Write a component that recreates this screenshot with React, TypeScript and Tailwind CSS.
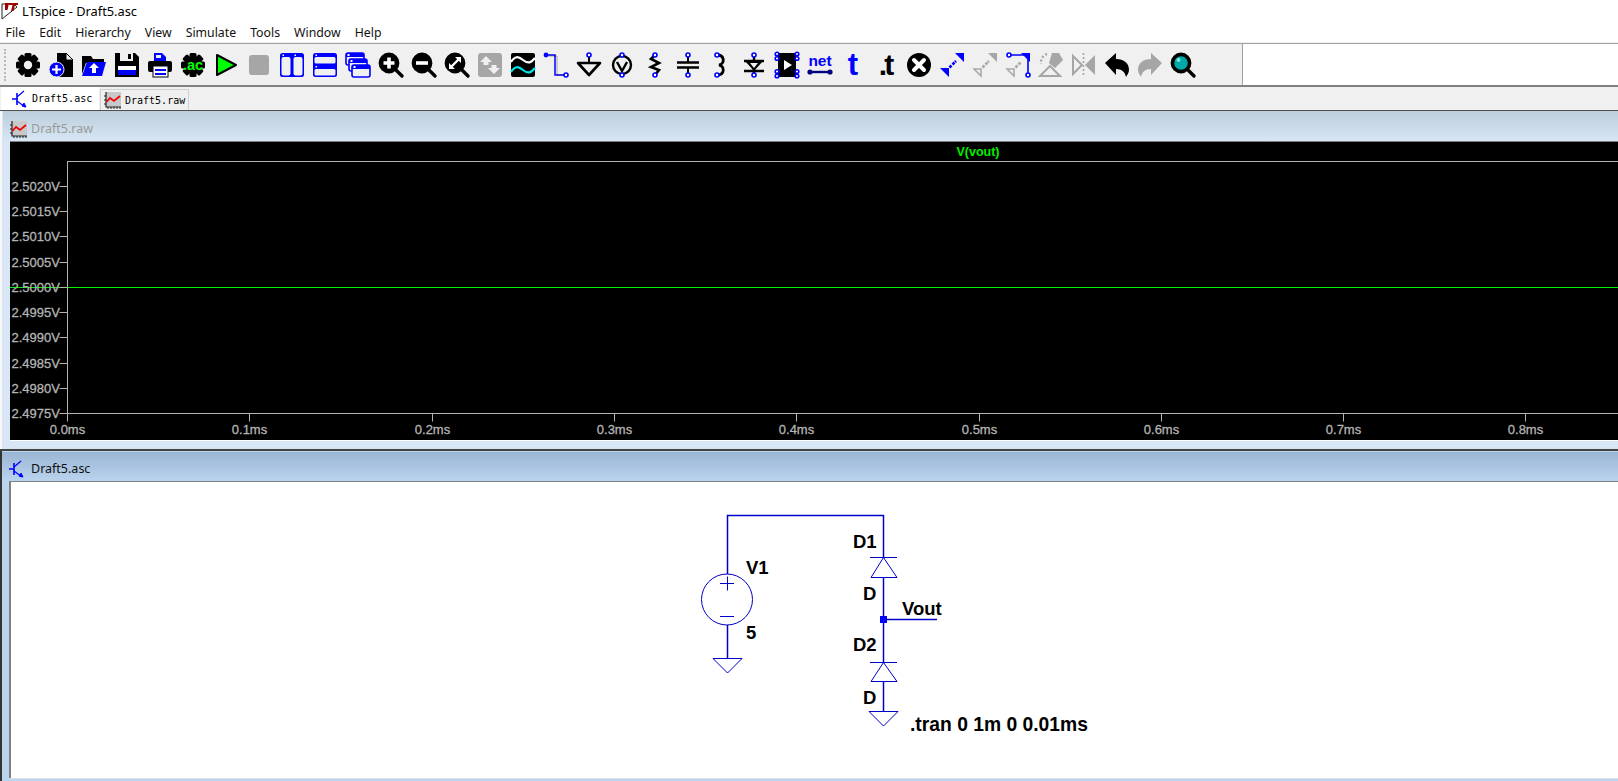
import type { ReactNode } from "react";

const BLUE = "#0000ff";
const GRAY = "#a6a6a6";

function Icon({ children }: { children: ReactNode }) {
  return (
    <div className="flex w-[33px] shrink-0 items-center justify-center">
      <svg width="26" height="26" viewBox="0 0 26 26" className="overflow-visible">
        {children}
      </svg>
    </div>
  );
}

const Pin = ({ x, y, c = BLUE }: { x: number; y: number; c?: string }) => (
  <circle cx={x} cy={y} r="2" fill="#fff" stroke={c} strokeWidth="1.6" />
);

const gearTeeth = [0, 45, 90, 135];

const Gear = ({ fill = "#000", hole = "#f0f0f0", r = 4.2 }: { fill?: string; hole?: string; r?: number }) => (
  <g>
    {gearTeeth.map((a) => (
      <rect key={a} x="9.5" y="1" width="7" height="24" rx="1.5" fill={fill} transform={`rotate(${a} 13 13)`} />
    ))}
    <circle cx="13" cy="13" r="9" fill={fill} />
    {r > 0 && <circle cx="13" cy="13" r={r} fill={hole} />}
  </g>
);

const Lens = ({ children, fill = "#000" }: { children?: ReactNode; fill?: string }) => (
  <g>
    <line x1="17" y1="17" x2="24" y2="24" stroke="#000" strokeWidth="3.4" strokeLinecap="round" />
    <circle cx="11" cy="11" r="8.6" fill={fill} stroke="#000" strokeWidth="3.6" />
    {children}
  </g>
);

const toolbarIcons: ReactNode[] = [
  <Gear key="settings" />,
  <g key="new">
    <path d="M9 1h9l7 7v17H9z" fill="#000" />
    <path d="M18 1v7h7z" fill="#f0f0f0" stroke="#000" strokeWidth="1" />
    <circle cx="8.5" cy="17.5" r="7.5" fill={BLUE} stroke="#f0f0f0" strokeWidth="1" />
    <path d="M8.5 13v9M4 17.5h9" stroke="#fff" strokeWidth="2.2" />
  </g>,
  <g key="open">
    <path d="M1 4h9l2 3h11v4H5L1 22z" fill="#000" />
    <path d="M6 10h19l-4 14H1z" fill={BLUE} />
    <path d="M13 11l5 5h-3v5h-4v-5H8z" fill="#fff" />
  </g>,
  <g key="save">
    <path d="M1 1h20l4 4v20H1z" fill="#000" />
    <rect x="6" y="1" width="13" height="8" fill="#f0f0f0" />
    <rect x="14" y="2" width="3" height="5" fill="#000" />
    <rect x="4" y="14" width="18" height="9" fill="#fff" />
    <rect x="4" y="18" width="18" height="5" fill={BLUE} />
  </g>,
  <g key="print">
    <path d="M7 1h8l4 4v5H7z" fill={BLUE} />
    <path d="M9 3h5v3H9z" fill="#f0f0f0" />
    <rect x="1" y="9" width="24" height="11" rx="2" fill="#000" />
    <rect x="6" y="14" width="15" height="11" fill="#fff" stroke="#000" strokeWidth="1" />
    <path d="M8 18h11M8 22h11" stroke={BLUE} strokeWidth="2" />
  </g>,
  <g key="ac">
    <Gear r={0} />
    <text x="13" y="18" textAnchor="middle" fontFamily="Liberation Sans, sans-serif" fontWeight="700" fontSize="14.5" fill="#00ff00">
      .ac
    </text>
  </g>,
  <path key="run" d="M4 3l19 10L4 23z" fill="#00ff00" stroke="#000" strokeWidth="2" strokeLinejoin="round" />,
  <rect key="stop" x="3" y="3" width="20" height="20" rx="3" fill={GRAY} />,
  <g key="tile-v">
    <rect x="1" y="1" width="24" height="24" rx="2.5" fill={BLUE} />
    <rect x="2.5" y="5" width="9" height="18.5" rx="2" fill="#f0f0f0" />
    <rect x="14.5" y="5" width="9" height="18.5" rx="2" fill="#f0f0f0" />
    <rect x="3.5" y="2.5" width="1.5" height="1.5" fill="#fff" />
    <rect x="15.5" y="2.5" width="1.5" height="1.5" fill="#fff" />
  </g>,
  <g key="tile-h">
    <rect x="1" y="1" width="24" height="24" rx="2.5" fill={BLUE} />
    <rect x="2.5" y="5" width="21" height="6.5" rx="1.5" fill="#f0f0f0" />
    <rect x="2.5" y="17" width="21" height="6.5" rx="1.5" fill="#f0f0f0" />
    <rect x="3.5" y="2.5" width="1.5" height="1.5" fill="#fff" />
    <rect x="3.5" y="14" width="1.5" height="1.5" fill="#fff" />
  </g>,
  <g key="cascade">
    {[
      [1, 1],
      [4, 7],
      [7, 13],
    ].map(([x, y]) => (
      <g key={x}>
        <rect x={x} y={y} width="18" height="12" rx="2" fill="#f0f0f0" stroke={BLUE} strokeWidth="1.6" />
        <rect x={x} y={y} width="18" height="4" fill={BLUE} />
        <rect x={x + 1.5} y={y + 1} width="2" height="2" fill="#fff" />
      </g>
    ))}
  </g>,
  <Lens key="zoom-in">
    <path d="M11 5.5v11M5.5 11h11" stroke="#fff" strokeWidth="3.6" />
  </Lens>,
  <Lens key="zoom-out">
    <path d="M5 11h12" stroke="#fff" strokeWidth="3.6" />
  </Lens>,
  <Lens key="zoom-fit">
    <path d="M7.5 14.5l7-7" stroke="#fff" strokeWidth="2.4" />
    <path d="M11 5h6v6zM5 11v6h6z" fill="#fff" />
  </Lens>,
  <g key="autorange">
    <rect x="1" y="1" width="24" height="24" rx="3" fill={GRAY} />
    <path d="M9 4l6 6h-3.500v3h-5v-3H3z" fill="#f0f0f0" />
    <path d="M17 22l-6-6h3.500v-3h5v3H23z" fill="#f0f0f0" />
  </g>,
  <g key="waveforms">
    <rect x="1" y="1" width="24" height="24" rx="2" fill="#000" />
    <path d="M1 10c4-6 7-6 12-2s8 3 12-2" stroke="#fff" strokeWidth="2.2" fill="none" />
    <path d="M1 20c4-6 7-6 12-2s8 3 12-2" stroke="#00e5e5" strokeWidth="2.2" fill="none" />
  </g>,
  <g key="wire">
    <path d="M3 3h9v20h11" stroke={BLUE} strokeWidth="1.5" fill="none" />
    <path d="M4 4h10v19h9" stroke="#000" strokeWidth="0.8" fill="none" opacity="0.4" />
    <circle cx="3" cy="3" r="2.4" fill={BLUE} />
    <Pin x={23} y={23} />
  </g>,
  <g key="ground">
    <line x1="13" y1="3" x2="13" y2="11" stroke="#000" strokeWidth="2" />
    <path d="M2 11h22L13 23z" fill="none" stroke="#000" strokeWidth="2.6" strokeLinejoin="round" />
    <Pin x={13} y={3} />
  </g>,
  <g key="label">
    <circle cx="13" cy="13" r="9" fill="none" stroke="#000" strokeWidth="2.4" />
    <path d="M8 10l5 9 5-9" fill="none" stroke="#000" strokeWidth="2.4" />
    <Pin x={13} y={3} />
    <Pin x={13} y={23} />
  </g>,
  <g key="resistor">
    <path d="M13 3l-4 4 8 4-8 4 8 3-4 5" fill="none" stroke="#000" strokeWidth="2.6" />
    <Pin x={13} y={3} />
    <Pin x={13} y={23} />
  </g>,
  <g key="capacitor">
    <path d="M13 3v7M13 16v7" stroke="#000" strokeWidth="2" />
    <path d="M2 10.5h22M2 15.5h22" stroke="#000" strokeWidth="2.6" />
    <Pin x={13} y={3} />
    <Pin x={13} y={23} />
  </g>,
  <g key="inductor">
    <path d="M9 3c8 0 8 9 2 10 6 1 6 10-2 10" fill="none" stroke="#000" strokeWidth="2.8" />
    <Pin x={9} y={3} />
    <Pin x={9} y={23} />
  </g>,
  <g key="diode">
    <path d="M3 9h20M13 3v20M3 19h20" stroke="#000" strokeWidth="2.4" />
    <path d="M4 9h18l-9 10z" fill="#000" />
    <path d="M9 11h8l-4 5z" fill="#f0f0f0" />
    <Pin x={13} y={3} />
    <Pin x={13} y={23} />
  </g>,
  <g key="component">
    <rect x="4" y="1" width="18" height="24" fill="#000" />
    <path d="M10 8l8 5-8 5z" fill="#fff" />
    {[2, 6.5, 19.5, 24].map((y) => (
      <g key={y}>
        <circle cx="3" cy={y} r="1.8" fill="#fff" stroke={BLUE} strokeWidth="1.6" />
        <circle cx="23" cy={y} r="1.8" fill="#fff" stroke={BLUE} strokeWidth="1.6" />
      </g>
    ))}
  </g>,
  <g key="net">
    <text x="13" y="14" textAnchor="middle" fontFamily="Liberation Sans, sans-serif" fontWeight="700" fontSize="15.5" fill={BLUE}>
      net
    </text>
    <path d="M3 20h20" stroke="#000080" strokeWidth="2.4" />
    <circle cx="3" cy="20" r="2.6" fill="#000080" />
    <circle cx="23" cy="20" r="2.6" fill="#000080" />
  </g>,
  <text key="t" x="13" y="23" textAnchor="middle" fontFamily="Liberation Sans, sans-serif" fontWeight="700" fontSize="31" fill={BLUE}>
    t
  </text>,
  <text key="dot-t" x="12" y="23" textAnchor="middle" fontFamily="Liberation Sans, sans-serif" fontWeight="700" fontSize="30" letterSpacing="-3" fill="#000">
    .t
  </text>,
  <g key="delete">
    <circle cx="13" cy="13" r="12" fill="#000" />
    <path d="M8 8l10 10M18 8L8 18" stroke="#fff" strokeWidth="4" strokeLinecap="round" />
  </g>,
  <g key="move">
    <path d="M25 1v9l-9-9zM1 16h9v9z" fill={BLUE} />
    <path d="M10.5 15.5l2-2M13.5 12.5l2-2" stroke={BLUE} strokeWidth="2.6" />
    <path d="M16 10l1-1" stroke={BLUE} strokeWidth="2.6" />
  </g>,
  <g key="drag">
    <path d="M25 1v9l-9-9z" fill={GRAY} />
    <path d="M2 17h7v7z" fill="#f0f0f0" stroke={GRAY} strokeWidth="1.5" />
    <path d="M10.5 15.5l2-2M13.5 12.5l2-2M16 10l1-1" stroke={GRAY} strokeWidth="2.6" />
  </g>,
  <g key="stretch">
    <path d="M5 3h18v20" stroke={BLUE} strokeWidth="1.6" fill="none" />
    <path d="M16 1h9v9z" fill={BLUE} />
    <Pin x={4} y={3} />
    <Pin x={23} y={23} />
    <path d="M2 17h7v7z" fill="#f0f0f0" stroke={GRAY} strokeWidth="1.5" />
    <path d="M10.5 15.5l2-2M13.5 12.5l2-2" stroke={GRAY} strokeWidth="2.6" />
  </g>,
  <g key="rotate">
    <path d="M14 1l7 0 4 7-8 8-6-5z" fill={GRAY} />
    <path d="M9 2a9 9 0 0 0-6 10" stroke={GRAY} strokeWidth="2.4" strokeDasharray="2 2" fill="none" />
    <path d="M12 14l10 10H2z" fill="#f0f0f0" stroke={GRAY} strokeWidth="2" />
  </g>,
  <g key="mirror">
    <path d="M2 4l9 9-9 9z" fill="#f0f0f0" stroke={GRAY} strokeWidth="2" />
    <path d="M24 3v20l-10-10z" fill={GRAY} />
    <path d="M12.5 1v24" stroke={GRAY} strokeWidth="1.6" strokeDasharray="2 2" />
  </g>,
  <path key="undo" d="M12 1v6c8 0 13 4 13 11 0 3-2 5-3 7-1-5-4-8-10-8v6L1 11z" fill="#000" />,
  <path key="redo" d="M14 1v6C6 7 1 11 1 18c0 3 2 5 3 7 1-5 4-8 10-8v6l11-12z" fill={GRAY} />,
  <Lens key="search" fill="#00a8a8">
    <circle cx="8.5" cy="8" r="2" fill="#7fe0e0" />
  </Lens>,
];

const yLabels = ["2.5020V", "2.5015V", "2.5010V", "2.5005V", "2.5000V", "2.4995V", "2.4990V", "2.4985V", "2.4980V", "2.4975V"];
const xLabels = ["0.0ms", "0.1ms", "0.2ms", "0.3ms", "0.4ms", "0.5ms", "0.6ms", "0.7ms", "0.8ms"];

function Plot() {
  // plot origin is the black client area, which starts at x=10, y=142 on the page
  const left = 57.5;
  const bottom = 271.5;
  return (
    <svg width="1608" height="298" className="block" fontFamily="Liberation Sans, sans-serif" fontSize="13" fill="#b4b4b4" stroke="#b4b4b4" strokeWidth="0.3">
      <rect x={left} y="19.5" width="1600" height={bottom - 19.5} fill="none" stroke="#b4b4b4" strokeWidth="1" />
      <line x1="0" x2="1608" y1="145.5" y2="145.5" stroke="#00f000" strokeWidth="1" />
      <text x="968" y="14" textAnchor="middle" fontWeight="700" fontSize="12.5" fill="#00f000" strokeWidth="0">
        V(vout)
      </text>
      {yLabels.map((label, i) => {
        const y = Math.round(44 + i * 25.22) + 0.5;
        return (
          <g key={label}>
            <line x1={left - 8} x2={left} y1={y} y2={y} stroke="#b4b4b4" strokeWidth="1" />
            <text x="1.5" y={y + 4.5}>
              {label}
            </text>
          </g>
        );
      })}
      {xLabels.map((label, i) => {
        const x = Math.round(57 + i * 182.3) + 0.5;
        return (
          <g key={label}>
            <line x1={x} x2={x} y1={bottom} y2={bottom + 8} stroke="#b4b4b4" strokeWidth="1" />
            <text x={x} y={bottom + 20} textAnchor="middle">
              {label}
            </text>
          </g>
        );
      })}
    </svg>
  );
}

function Schematic() {
  const stroke = "#0000c8";
  const labels: [string, number, number, number][] = [
    ["V1", 746, 574, 18.5],
    ["5", 746, 639, 18.5],
    ["D1", 853, 548, 18.5],
    ["D", 863, 600, 18.5],
    ["Vout", 902, 615, 18.5],
    ["D2", 853, 651, 18.5],
    ["D", 863, 704, 18.5],
    [".tran 0 1m 0 0.01ms", 910, 731, 19.3],
  ];
  // drawn in page coordinates, the sheet starts at x=11, y=482
  return (
    <svg width="1607" height="296" viewBox="11 482 1607 296" className="block" fontFamily="Liberation Sans, sans-serif" fontWeight="700" fill="#000">
      <g fill="none" stroke={stroke}>
        <path d="M727.5 574V515.5H883.5V557" strokeWidth="1.5" />
        <path d="M727.5 625V658M883.5 577V662M883.5 682V711M883.5 619.5H937" strokeWidth="1.5" />
        <circle cx="727" cy="599.5" r="25.5" strokeWidth="1" />
        <path d="M720 583.5h14M727.5 576.5v14M720 616.5h14" strokeWidth="1" />
        <path d="M713 658.5h29L727.5 673zM869 711.5h29L883.5 726z" strokeWidth="1" />
        <path d="M870 557.5h27M871 577.5h26L883.5 557.5zM870 662.5h27M871 681.5h26L883.5 662.5z" strokeWidth="1" />
      </g>
      <rect x="880" y="616" width="7" height="7" fill={BLUE} />
      {labels.map(([text, x, y, size]) => (
        <text key={`${text}${y}`} x={x} y={y} fontSize={size}>
          {text}
        </text>
      ))}
    </svg>
  );
}

const menus = ["File", "Edit", "Hierarchy", "View", "Simulate", "Tools", "Window", "Help"];

const SchematicGlyph = () => (
  <svg width="18" height="18" viewBox="0 0 18 18" fill="none" stroke={BLUE} className="shrink-0">
    <path d="M1 9h5M6 3v12" strokeWidth="1.6" />
    <path d="M6 7l7-6M6 11l8 6" strokeWidth="1.2" />
    <path d="M15 17l-4-1 2-3z" fill={BLUE} />
  </svg>
);

const WaveGlyph = () => (
  <svg width="17" height="17" viewBox="0 0 17 17" fill="none" className="shrink-0">
    <rect x="2" y="0" width="15" height="15" fill="#c8c8c8" />
    <path d="M2 0v15h15" stroke="#222" strokeWidth="1.2" />
    <path d="M0 4h2M0 8h2M0 12h2M4 15v2M7 15v2M10 15v2M13 15v2M16 15v2" stroke="#222" />
    <path d="M2.5 10l3.5-4 4 3 6-5" stroke="#f00000" strokeWidth="1.7" />
  </svg>
);

export default function App() {
  return (
    <div className="flex h-[781px] w-[1618px] flex-col overflow-hidden bg-white font-['Noto_Sans',sans-serif] text-black">
      {/* Title bar */}
      <div className="flex h-[22px] shrink-0 items-center">
        <svg width="18" height="20" viewBox="0 0 18 20" className="ml-[1px] shrink-0">
          <path d="M1 3v15L16 6l-3-3z" fill="#fff" stroke="#222" strokeWidth="1" />
          <path d="M4 2h4L6.500 9H4zM8 2h9v2h-3l-1.500 6h-2.500L11.500 4H8z" fill="#a00000" />
        </svg>
        <span className="ml-[3px] text-[12.8px] leading-none">LTspice - Draft5.asc</span>
      </div>

      {/* Menu */}
      <div className="flex h-[20px] shrink-0 items-center gap-[14px] pl-[5.500px] pt-[2px] text-[12.3px] leading-none text-[#111]">
        {menus.map((m) => (
          <span key={m}>{m}</span>
        ))}
      </div>
      <div className="h-[2px] shrink-0 border-b border-[#a0a0a0] bg-[#f0f0f0]" />

      {/* Toolbar */}
      <div className="flex h-[43px] shrink-0 border-b-2 border-[#808080]">
        <div className="flex w-[1243px] items-center border-r border-[#a0a0a0] bg-[#f0f0f0]">
          <div className="ml-[4px] mr-[6px] h-[32px] w-[2px] border-l-2 border-dotted border-[#b8b8b8]" />
          <div className="-ml-[0.5px] flex">{toolbarIcons.map((icon, i) => <Icon key={i}>{icon}</Icon>)}</div>
        </div>
      </div>

      {/* Tabs */}
      <div className="flex h-[24px] shrink-0 items-end border-b border-[#505050] bg-[#f0f0f0] pl-[1px] font-['DejaVu_Sans_Mono',monospace] text-[10px] leading-none text-black">
        <div className="flex h-[23px] w-[98px] items-center gap-[3px] bg-white pl-[10px] pt-[1px]">
          <SchematicGlyph />
          <span>Draft5.asc</span>
        </div>
        <div className="ml-[1px] flex h-[21px] w-[89px] items-center gap-[4px] border border-b-0 border-[#d0d0d0] pl-[3px] pt-[1px]">
          <WaveGlyph />
          <span>Draft5.raw</span>
        </div>
      </div>

      {/* Waveform window */}
      <div className="flex h-[338px] shrink-0 flex-col border-l-2 border-[#f8f8f8] bg-[#d8e6f5] pl-[8px]">
        <div className="-ml-[7px] flex h-[30px] shrink-0 items-center gap-[4px] bg-gradient-to-b from-[#bccddc] to-[#d8e6f5] pl-[7px] pt-[7px] text-[12.5px] leading-none text-[#9a9a9a]">
          <WaveGlyph />
          <span>Draft5.raw</span>
        </div>
        <div className="h-[1px] shrink-0 bg-[#808080]" />
        <div className="h-[298px] shrink-0 overflow-hidden bg-black">
          <Plot />
        </div>
        <div className="h-[1px] shrink-0 bg-white" />
      </div>
      <div className="h-[2px] shrink-0 bg-[#444]" />

      {/* Schematic window */}
      <div className="flex min-h-0 flex-1 flex-col border-l-2 border-[#333] bg-[#bad3ee] pl-[7px]">
        <div className="-ml-[7px] mt-[1px] flex h-[29px] shrink-0 items-center gap-[5px] bg-gradient-to-b from-[#9ab6d3] to-[#bad3ee] pl-[6px] pt-[5px] text-[12.5px] leading-none text-[#111]">
          <SchematicGlyph />
          <span>Draft5.asc</span>
        </div>
        <div className="h-[297px] shrink-0 overflow-hidden border-l-2 border-t border-[#808080] bg-white">
          <Schematic />
        </div>
        <div className="h-[1px] shrink-0 bg-[#e0e0e0]" />
      </div>
    </div>
  );
}
